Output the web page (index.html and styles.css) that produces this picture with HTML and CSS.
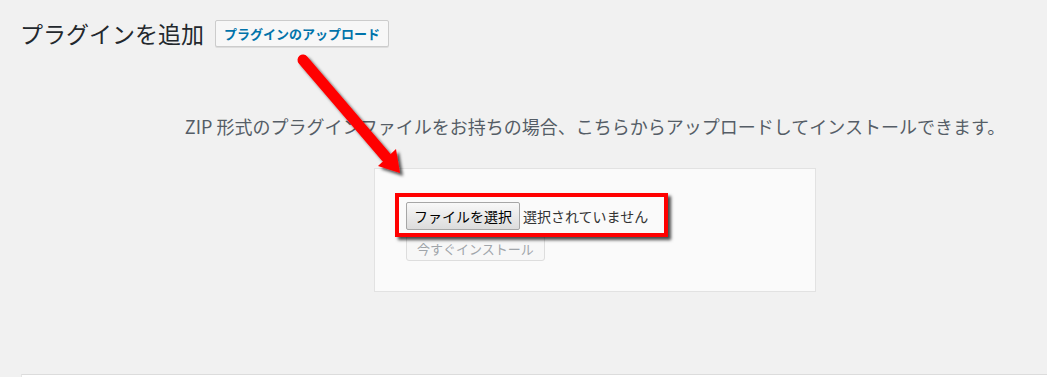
FILE: index.html
```html
<!DOCTYPE html>
<html lang="ja">

<head>
  <meta charset="UTF-8">
  <meta name="viewport" content="width=device-width, initial-scale=1.0">
  <title>プラグインを追加</title>
  <link rel="stylesheet" href="styles.css">
</head>

<body>
  <div class="wrap">
    <h1 class="page-title">
      <span>プラグインを追加</span>
      <a href="" class="title-action">プラグインのアップロード</a>
    </h1>

    <div class="upload-plugin">
      <p class="install-help">ZIP 形式のプラグインファイルをお持ちの場合、こちらからアップロードしてインストールできます。</p>
      <form class="upload-form">
        <div class="file-row">
          <span class="file-btn">ファイルを選択</span>
          <span class="file-name">選択されていません</span>
        </div>
        <button class="install-btn" disabled>今すぐインストール</button>
      </form>
    </div>
  </div>

  <div class="next-panel"></div>

  <!-- 注釈の矢印 -->
  <svg class="arrow" width="1047" height="377" viewBox="0 0 1047 377">
    <defs>
      <filter id="shade" x="-20%" y="-20%" width="140%" height="140%">
        <feDropShadow dx="3" dy="3" stdDeviation="1.6" flood-color="#000" flood-opacity="0.65" />
      </filter>
    </defs>
    <g filter="url(#shade)" fill="#ff0000">
      <line x1="303" y1="60" x2="386" y2="157" stroke="#ff0000" stroke-width="11" stroke-linecap="round" />
      <polygon points="378,166 400,173 396,149" />
    </g>
  </svg>
</body>

</html>
```

FILE: styles.css
```css
html,
body {
  margin: 0;
  background-color: #f1f1f1;
  overflow: hidden;
  font-family: "Noto Sans CJK JP", "Noto Sans", sans-serif;
}

.wrap {
  width: 1150px;
  padding: 10px 0 0 20px;
}

.page-title {
  display: flex;
  align-items: center;
  gap: 11px;
  margin: 0;
  padding: 9px 0 4px;
  font-size: 23px;
  font-weight: 400;
  line-height: 29px;
  color: #23282d;
}

.title-action {
  display: inline-flex;
  align-items: center;
  height: 25px;
  padding: 0 8px;
  border: 1px solid #ccc;
  border-radius: 2px;
  background-color: #f7f7f7;
  box-shadow: 0 1px 0 #ddd;
  color: #0073aa;
  font-size: 13px;
  font-weight: 700;
  text-decoration: none;
}

.upload-plugin {
  margin-top: 32px;
}

.install-help {
  margin: 0;
  padding: 30px 0;
  text-align: center;
  font-size: 18px;
  line-height: 24px;
  color: #555d66;
}

.upload-form {
  width: 380px;
  margin: 0 auto;
  padding: 30px;
  border: 1px solid #e2e2e2;
  background-color: #fafafa;
}

.file-row {
  position: relative;
  display: flex;
  align-items: center;
  gap: 3px;
  height: 34px;
}

/* 赤い囲み枠 */
.file-row::after {
  content: "";
  position: absolute;
  left: -10px;
  top: -6px;
  width: 273px;
  height: 44px;
  box-sizing: border-box;
  border: 4px solid #ff0000;
  box-shadow: 3px 3px 3px rgba(0, 0, 0, 0.7);
}

.file-btn {
  display: inline-flex;
  align-items: center;
  height: 26px;
  margin-left: 1px;
  padding: 0 7px;
  border: 1px solid #a6a6a6;
  border-radius: 2px;
  background: linear-gradient(#f8f8f8, #dcdcdc);
  color: #000;
  font-size: 14px;
}

.file-name {
  font-size: 14px;
  color: #333;
}

.install-btn {
  display: block;
  height: 26px;
  margin: 2px 0 0 1px;
  padding: 0 10px;
  border: 1px solid #ddd;
  border-radius: 3px;
  background-color: #f7f7f7;
  color: #a0a5aa;
  font-family: inherit;
  font-size: 13px;
}

.next-panel {
  height: 40px;
  margin: 82px 0 0 21px;
  border-top: 1px solid #dcdcdc;
  border-left: 1px solid #e5e5e5;
  background-color: #fff;
}

.arrow {
  position: absolute;
  left: 0;
  top: 0;
  pointer-events: none;
}
```
